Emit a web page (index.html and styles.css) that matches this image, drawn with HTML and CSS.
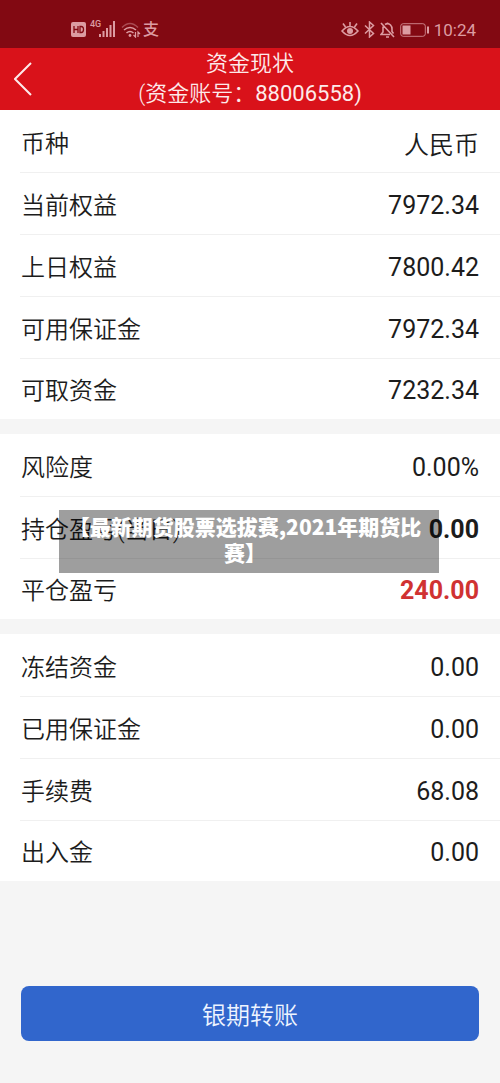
FILE: index.html
```html
<!DOCTYPE html>
<html lang="zh-CN">
<head>
<meta charset="utf-8">
<meta name="viewport" content="width=device-width, initial-scale=1">
<title>资金现状</title>
<link rel="stylesheet" href="styles.css">
</head>
<body>
<div class="status">
  <div class="status-left">
    <svg width="15" height="15" viewBox="0 0 15 15"><rect width="15" height="15" rx="2" fill="currentColor"/><path d="M3 4v7M7 4v7M3 7.500h4M9 4.500v6h1.200q2.300 0 2.300-3t-2.300-3z" fill="none" stroke="#820912" stroke-width="1.300"/></svg>
    <span class="net">4G</span>
    <svg class="signal" width="17" height="16" viewBox="0 0 17 16" fill="currentColor"><path d="M0 13h2v3H0zM3.500 10h2v6h-2zM7 7h2v9H7zM10.500 4h2v12h-2zM14 0h2v16h-2z"/></svg>
    <svg class="wifi" width="20" height="16" viewBox="0 0 20 16" fill="none" stroke="currentColor" stroke-width="1.600"><path d="M1 5.500q8-8 16 0" opacity=".45"/><path d="M3 8q6-5 12 0M5.500 11q3.500-3 7 0"/><circle cx="9" cy="13.500" r="1.400" fill="currentColor" stroke="none"/><path d="M14.500 10v5l-2-2M17 15v-5l2 2" stroke-width="1.200"/></svg>
    <span class="pay">支</span>
  </div>
  <div class="status-right">
    <svg width="18" height="16" viewBox="0 0 18 16" fill="none" stroke="currentColor" stroke-width="1.600"><path d="M1 9q8-9 16 0-8 9-16 0zM9 4V0M4.500 5 2 1.500M13.500 5 16 1.500"/><circle cx="9" cy="9" r="3" fill="currentColor" stroke="none"/></svg>
    <svg width="11" height="17" viewBox="0 0 11 17" fill="none" stroke="currentColor" stroke-width="1.500"><path d="m1 4.500 8.500 8L5.500 16V1l4 3.500-8.500 8"/></svg>
    <svg width="15" height="16" viewBox="0 0 15 16" fill="none" stroke="currentColor" stroke-width="1.600"><path d="m1 1 13 14M3 4.500V10l-2 2.500h9M5 2.500q3-2 5.500.500Q12 4.500 12 7v2.500l1.500 2M7.500.500v1.500M6 15h3"/></svg>
    <svg width="29" height="14" viewBox="0 0 29 14"><rect x=".7" y=".7" width="24.600" height="12.600" rx="2.500" fill="none" stroke="currentColor" stroke-width="1" opacity=".8"/><path d="M2.500 2.500h8v9h-8zM27 3.500h2v7h-2z" fill="currentColor"/></svg>
    <time class="clock">10:24</time>
  </div>
</div>
<header class="header">
  <button class="back" aria-label="返回"><svg width="18" height="34" viewBox="0 0 18 34" fill="none" stroke="currentColor" stroke-width="2"><path d="M17 1 1 17l16 16"/></svg></button>
  <h1 class="title">资金现状<br>(资金账号：<span class="account">88006558)</span></h1>
</header>
<main class="main">
  <dl class="group">
    <div class="row"><dt>币种</dt><dd class="light">人民币</dd></div>
    <div class="row"><dt>当前权益</dt><dd>7972.34</dd></div>
    <div class="row"><dt>上日权益</dt><dd>7800.42</dd></div>
    <div class="row"><dt>可用保证金</dt><dd>7972.34</dd></div>
    <div class="row"><dt>可取资金</dt><dd>7232.34</dd></div>
  </dl>
  <dl class="group">
    <div class="row"><dt>风险度</dt><dd>0.00%</dd></div>
    <div class="row"><dt>持仓盈亏(当日)</dt><dd class="strong">0.00</dd>
      <div class="caption">【最新期货股票选拔赛,2021年期货比赛】</div></div>
    <div class="row"><dt>平仓盈亏</dt><dd class="strong gain">240.00</dd></div>
  </dl>
  <dl class="group">
    <div class="row"><dt>冻结资金</dt><dd>0.00</dd></div>
    <div class="row"><dt>已用保证金</dt><dd>0.00</dd></div>
    <div class="row"><dt>手续费</dt><dd>68.08</dd></div>
    <div class="row"><dt>出入金</dt><dd>0.00</dd></div>
  </dl>
  <button class="transfer">银期转账</button>
</main>
</body>
</html>
```
FILE: styles.css
```css
* { box-sizing: border-box; }
body {
  margin: 0;
  min-height: 100vh;
  background: #f5f5f5;
  color: #1c1c1c;
  font-family: Roboto, "Noto Sans CJK SC", sans-serif;
}
button { border: 0; font: inherit; cursor: pointer; }
svg { display: block; flex: none; }
.status {
  display: flex;
  justify-content: space-between;
  height: 48px;
  padding: 11px 24px 0 71px;
  background: #820912;
  color: #dc9ca2;
}
.status-left, .status-right { display: flex; align-items: center; height: 37px; }
.status-right { gap: 5px; }
.net {
  width: 13px;
  align-self: flex-start;
  margin: 8px 0 0 4px;
  font-size: 9px;
  line-height: 10px;
  font-weight: 500;
}
.signal { margin: 0 0 2px -4px; }
.wifi { margin-left: 5px; }
.pay { margin-left: 2px; font-size: 16px; font-weight: 500; line-height: 18px; }
.clock { font-size: 17px; }
.header {
  display: grid;
  grid-template-columns: 46px 1fr 46px;
  align-items: center;
  padding: 1px 0;
  background: #d9121a;
  color: #fdeaea;
}
.back { display: flex; justify-content: flex-end; padding: 0 14px 0 0; background: none; color: inherit; }
.title {
  margin: 0;
  font-size: 22px;
  line-height: 30px;
  font-weight: 350;
  text-align: center;
}
.account { font-weight: 400; }
.group { margin: 0 0 15px; background: #fff; }
.row {
  position: relative;
  display: flex;
  align-items: center;
  justify-content: space-between;
  height: 62px;
  padding: 4px 21px 0;
}
.row:last-child { height: 61px; }
.row:not(:last-child)::after {
  content: "";
  position: absolute;
  inset: auto 0 -1px 20px;
  height: 1px;
  background: #f0f0f0;
}
dt { padding-bottom: 4px; font-size: 24px; font-weight: 350; }
dd { margin: 0; font-size: 25px; }
.light { font-weight: 350; }
.strong { font-weight: 700; }
.gain { color: #d03232; }
.caption {
  position: absolute;
  z-index: 1;
  top: 14px;
  left: 59px;
  right: 61px;
  padding: 3px 16px 8px 8px;
  background: rgba(0, 0, 0, .38);
  color: #fff;
  font: 900 21px/26px "Noto Sans CJK SC", sans-serif;
  text-align: center;
}
.transfer {
  display: block;
  width: calc(100% - 42px);
  height: 55px;
  margin: 105px 21px 42px;
  padding-bottom: 2px;
  border-radius: 8px;
  background: #3166cc;
  color: #eef4ff;
  font-size: 24px;
  font-weight: 350;
}
```
